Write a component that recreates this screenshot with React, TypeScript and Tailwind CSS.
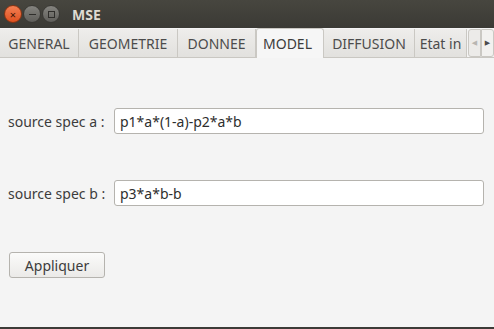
import React from 'react';

const tabs = ['GENERAL', 'GEOMETRIE', 'DONNEE', 'MODEL', 'DIFFUSION', 'Etat in'];

const tabWidths: Record<string, string> = {
  GENERAL: 'w-[79px]',
  GEOMETRIE: 'w-[99px]',
  DONNEE: 'w-[78px]',
  MODEL: 'w-[68px]',
  DIFFUSION: 'w-[91px]',
  'Etat in': 'w-[52px]',
};

function WindowButtons() {
  return (
    <div className="flex items-center gap-[1px] pl-[4px]">
      <div className="w-[18px] h-[18px] rounded-full bg-gradient-to-b from-[#f37f52] to-[#e0501d] border border-[#8a3413] flex items-center justify-center text-[#3a1406] text-[11px] leading-none">
        ×
      </div>
      <div className="w-[18px] h-[18px] rounded-full bg-gradient-to-b from-[#85847f] to-[#5f5e5a] border border-[#3a3935] flex items-center justify-center">
        <div className="w-[7px] h-[1px] bg-[#2f2e2b]" />
      </div>
      <div className="w-[18px] h-[18px] rounded-full bg-gradient-to-b from-[#85847f] to-[#5f5e5a] border border-[#3a3935] flex items-center justify-center">
        <div className="w-[7px] h-[7px] border border-[#2f2e2b]" />
      </div>
    </div>
  );
}

function Field({ label, value }: { label: string; value: string }) {
  return (
    <div className="flex items-center h-[26px]">
      <span className="w-[106px] pl-[8px] text-[14px] text-[#3c3c3c]">{label}</span>
      <div className="ml-[8px] w-[370px] h-[26px] bg-white border border-[#b5b3ae] rounded-[3px] flex items-center pl-[5px] text-[14px] text-[#2e2e2e]">
        {value}
      </div>
    </div>
  );
}

export default function App() {
  return (
    <div className="w-[494px] h-[329px] flex flex-col bg-[#f4f4f4] overflow-hidden" style={{ fontFamily: '"Noto Sans", "DejaVu Sans", sans-serif' }}>
      {/* title bar */}
      <div className="h-[28px] flex items-center bg-gradient-to-b from-[#47463f] to-[#3b3a35] shrink-0">
        <WindowButtons />
        <span className="ml-[12px] text-[14px] font-bold text-[#dfdbd2]">MSE</span>
      </div>

      {/* tab strip */}
      <div className="h-[30px] flex items-end bg-[#f4f4f4] border-b border-[#c9c7c2] shrink-0 relative">
        {tabs.map((t) => {
          const active = t === 'MODEL';
          return (
            <div
              key={t}
              className={`${tabWidths[t]} flex items-center text-[14px] overflow-hidden whitespace-nowrap border-r border-[#cac8c3] ${
                active
                  ? 'h-[30px] bg-[#f6f6f6] border-l border-t rounded-t-[3px] text-[#3c3c3c] pl-[6px] -mb-px'
                  : 'h-[28px] bg-gradient-to-b from-[#eeedeb] to-[#e2e1de] text-[#4c4c4c] justify-center'
              }`}
            >
              {t}
            </div>
          );
        })}
        <div className="flex h-[28px] items-stretch ml-[1px]">
          <div className="w-[13px] bg-[#ecebe9] border border-[#cac8c3] rounded-l-[3px] flex items-center justify-center text-[7px] text-[#b8b6b1]">◀</div>
          <div className="w-[13px] bg-[#f2f1ef] border border-[#cac8c3] rounded-r-[3px] flex items-center justify-center text-[7px] text-[#4c4c4c]">▶</div>
        </div>
      </div>

      {/* content */}
      <div className="flex-1 flex flex-col">
        <div className="mt-[50px]">
          <Field label="source spec a :" value="p1*a*(1-a)-p2*a*b" />
        </div>
        <div className="mt-[46px]">
          <Field label="source spec b :" value="p3*a*b-b" />
        </div>
        <div className="mt-[46px] pl-[9px]">
          <button className="w-[96px] h-[26px] rounded-[3px] border border-[#b5b3ae] bg-gradient-to-b from-[#fbfbfa] to-[#ebeae8] text-[14px] text-[#3c3c3c]">
            Appliquer
          </button>
        </div>
      </div>
      <div className="h-[2px] bg-[#3c3b37] shrink-0" />
    </div>
  );
}
